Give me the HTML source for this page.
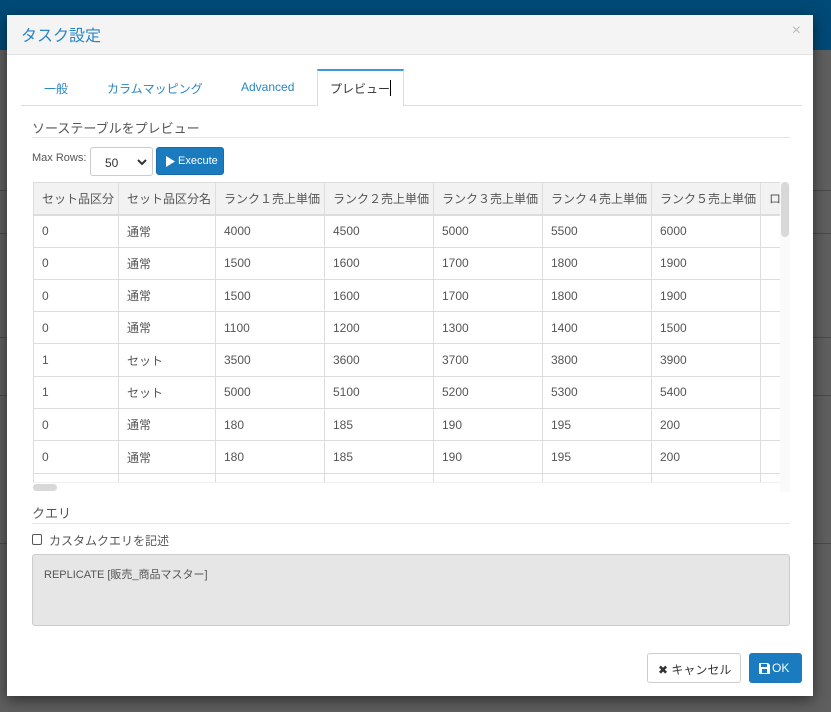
<!DOCTYPE html>
<html><head><meta charset="utf-8"><style>
*{box-sizing:border-box;margin:0;padding:0}
body{width:831px;height:712px;overflow:hidden;background:#5f5f5f;font-family:"Liberation Sans","Noto Sans CJK JP",sans-serif;font-size:12px;color:#555;position:relative}
.topbar{position:absolute;left:0;top:0;width:831px;height:50px;background:#004a77}
.bgline{position:absolute;left:0;height:1px;background:#4a4a4a;width:831px}
.modal{position:absolute;left:7px;top:15px;width:806px;height:681px;background:#fff;box-shadow:0 4px 14px rgba(0,0,0,.5)}
.hdr{position:absolute;left:0;top:0;width:806px;height:40px;background:#f4f4f4;border-bottom:1px solid #e2e2e2}
.title{position:absolute;left:14px;top:7px;font-size:16px;color:#2a86c2}
.close{position:absolute;right:12px;top:7px;font-size:16px;color:#bbb}
.abs{position:absolute}
.tabs{position:absolute;left:14px;top:90px;width:781px;height:1px;background:#ddd}
.tab{position:absolute;top:65px;font-size:12px;color:#2a86c2}
.active{position:absolute;left:310px;top:54px;width:87px;height:37px;border:1px solid #ddd;border-top:2px solid #3c9ad6;border-bottom:none;background:#fff}
table{border-collapse:collapse;table-layout:fixed;position:absolute;left:0;top:0}
td,th{border:1px solid #ddd;height:32.3px;padding:0 8px;text-align:left;font-weight:normal;white-space:nowrap;overflow:hidden;font-size:12px;color:#555}
th{background:#f2f2f2;border-bottom:2px solid #ddd}
.btn{position:absolute;border-radius:3px}
</style></head><body>
<div class="topbar"></div>
<div class="bgline" style="top:190px"></div><div class="bgline" style="top:233px"></div>
<div class="bgline" style="top:337px"></div><div class="bgline" style="top:395px"></div>
<div class="bgline" style="top:543px"></div>
<div class="modal">
 <div class="hdr"><div class="title">タスク設定</div><div class="close">×</div></div>
 <div class="tabs"></div>
 <div class="active"></div>
 <div class="tab" style="left:37px">一般</div>
 <div class="tab" style="left:100px">カラムマッピング</div>
 <div class="tab" style="left:234px">Advanced</div>
 <div class="tab" style="left:323px;color:#333">プレビュー<span style="display:inline-block;width:1px;height:16px;background:#000;vertical-align:-3px"></span></div>
 <div class="abs" style="left:25px;top:103px;font-size:13px;color:#555">ソーステーブルをプレビュー</div>
 <div class="abs" style="left:25px;top:122px;width:758px;height:1px;background:#e5e5e5"></div>
 <div class="abs" style="left:25px;top:137px;font-size:11px">Max Rows:</div>
 <div class="abs" style="left:83px;top:132px;width:63px;height:29px;border:1px solid #ccc;border-radius:3px;background:#fff"><span class="abs" style="left:14px;top:8px;font-size:12px;color:#333">50</span><svg class="abs" style="left:46px;top:10px" width="10" height="8"><path d="M1 2 L5 6 L9 2" stroke="#333" stroke-width="2" fill="none"/></svg></div>
 <div class="btn" style="left:149px;top:132px;width:68px;height:28px;background:#1a7bbf;border:1px solid #166da9;color:#fff;font-size:11px"><svg class="abs" style="left:9px;top:8px" width="9" height="11"><path d="M0 0 L9 5.5 L0 11Z" fill="#fff"/></svg><span class="abs" style="left:21px;top:7px">Execute</span></div>
 <div class="abs" style="left:26px;top:167px;width:747px;height:310px;overflow:hidden;background:#fff">
 <table style="width:800px">
  <colgroup><col style="width:85px"><col style="width:97px"><col style="width:109px"><col style="width:109px"><col style="width:109px"><col style="width:109px"><col style="width:109px"><col style="width:73px"></colgroup>
  <tr><th>セット品区分</th><th>セット品区分名</th><th>ランク１売上単価</th><th>ランク２売上単価</th><th>ランク３売上単価</th><th>ランク４売上単価</th><th>ランク５売上単価</th><th>ロ</th></tr>
  <tr><td>0</td><td>通常</td><td>4000</td><td>4500</td><td>5000</td><td>5500</td><td>6000</td><td></td></tr>
  <tr><td>0</td><td>通常</td><td>1500</td><td>1600</td><td>1700</td><td>1800</td><td>1900</td><td></td></tr>
  <tr><td>0</td><td>通常</td><td>1500</td><td>1600</td><td>1700</td><td>1800</td><td>1900</td><td></td></tr>
  <tr><td>0</td><td>通常</td><td>1100</td><td>1200</td><td>1300</td><td>1400</td><td>1500</td><td></td></tr>
  <tr><td>1</td><td>セット</td><td>3500</td><td>3600</td><td>3700</td><td>3800</td><td>3900</td><td></td></tr>
  <tr><td>1</td><td>セット</td><td>5000</td><td>5100</td><td>5200</td><td>5300</td><td>5400</td><td></td></tr>
  <tr><td>0</td><td>通常</td><td>180</td><td>185</td><td>190</td><td>195</td><td>200</td><td></td></tr>
  <tr><td>0</td><td>通常</td><td>180</td><td>185</td><td>190</td><td>195</td><td>200</td><td></td></tr>
  <tr><td>0</td><td>通常</td><td>180</td><td>185</td><td>190</td><td>195</td><td>200</td><td></td></tr>
 </table>
 <div class="abs" style="left:0;top:300px;width:747px;height:10px;background:#fff;border-top:1px solid #f0f0f0"></div>
 <div class="abs" style="left:0;top:302px;width:24px;height:7px;border-radius:4px;background:#d8d8d8"></div>
 </div>
 <div class="abs" style="left:773px;top:167px;width:10px;height:310px;background:#fafafa"><div style="margin-left:1px;width:8px;height:55px;border-radius:4px;background:#d8d8d8"></div></div>
 <div class="abs" style="left:25px;top:488px;font-size:13px">クエリ</div>
 <div class="abs" style="left:25px;top:508px;width:758px;height:1px;background:#e5e5e5"></div>
 <div class="abs" style="left:25px;top:519px;width:10px;height:11px;border:1px solid #555;border-radius:2px"></div>
 <div class="abs" style="left:42px;top:517px;font-size:12px">カスタムクエリを記述</div>
 <div class="abs" style="left:25px;top:539px;width:758px;height:72px;background:#e6e6e6;border:1px solid #ccc;border-radius:3px"><span class="abs" style="left:11px;top:11px;font-size:11px;color:#555">REPLICATE [販売_商品マスター]</span></div>
 <div class="btn" style="left:640px;top:638px;width:94px;height:30px;border:1px solid #ccc;background:#fff;color:#333;font-size:12px"><span class="abs" style="left:10px;top:7px">✖ キャンセル</span></div>
 <div class="btn" style="left:742px;top:638px;width:53px;height:30px;background:#1a7bbf;color:#fff;font-size:12px"><svg class="abs" style="left:10px;top:10px" width="11" height="11"><path d="M0 0H9L11 2V11H0Z" fill="#fff"/><rect x="2" y="1" width="6" height="3" fill="#1a7bbf"/><rect x="3" y="6" width="5" height="4" fill="#1a7bbf"/></svg><span class="abs" style="left:23px;top:8px">OK</span></div>
</div>
</body></html>
